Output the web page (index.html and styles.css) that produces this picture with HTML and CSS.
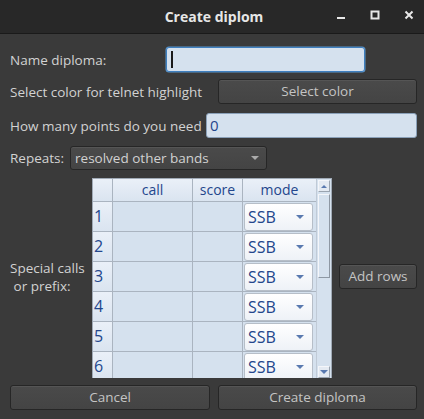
FILE: index.html
```html
<!DOCTYPE html>
<html>
<head>
<meta charset="utf-8">
<link rel="stylesheet" href="styles.css">
</head>
<body>
<div class="window">
  <div class="titlebar">
    <div class="title">Create diplom</div>
    <div class="wbtns">
      <svg class="wb" width="10" height="10" viewBox="0 0 10 10"><rect x="1" y="7" width="8" height="2" fill="#e8e8e8"/></svg>
      <svg class="wb" width="10" height="10" viewBox="0 0 10 10"><rect x="1.5" y="1.5" width="7" height="7" fill="none" stroke="#e8e8e8" stroke-width="2"/></svg>
      <svg class="wb" width="10" height="10" viewBox="0 0 10 10"><path d="M1.5 1.5 L8.5 8.5 M8.5 1.5 L1.5 8.5" stroke="#e8e8e8" stroke-width="2"/></svg>
    </div>
  </div>
  <div class="content">
    <div class="row r1">
      <span class="label l1">Name diploma:</span>
      <div class="input focus name"><span class="caret"></span></div>
    </div>
    <div class="row r2">
      <span class="label">Select color for telnet highlight</span>
      <div class="button selcol">Select color</div>
    </div>
    <div class="row r3">
      <span class="label">How many points do you need</span>
      <div class="input points">0</div>
    </div>
    <div class="row r4">
      <span class="label">Repeats:</span>
      <div class="combo">resolved other bands<span class="tri"></span></div>
    </div>
    <div class="row r5">
      <span class="label special">Special calls<br>&nbsp;or prefix:</span>
      <div class="table">
        <div class="tmain">
          <div class="trow head">
            <div class="c num"></div>
            <div class="c call">call</div>
            <div class="c score">score</div>
            <div class="c mode">mode</div>
          </div>
          <div class="trow"><div class="c num">1</div><div class="c call"></div><div class="c score"></div><div class="c mode"><div class="ssb">SSB<span class="btri"></span></div></div></div>
          <div class="trow"><div class="c num">2</div><div class="c call"></div><div class="c score"></div><div class="c mode"><div class="ssb">SSB<span class="btri"></span></div></div></div>
          <div class="trow"><div class="c num">3</div><div class="c call"></div><div class="c score"></div><div class="c mode"><div class="ssb">SSB<span class="btri"></span></div></div></div>
          <div class="trow"><div class="c num">4</div><div class="c call"></div><div class="c score"></div><div class="c mode"><div class="ssb">SSB<span class="btri"></span></div></div></div>
          <div class="trow"><div class="c num">5</div><div class="c call"></div><div class="c score"></div><div class="c mode"><div class="ssb">SSB<span class="btri"></span></div></div></div>
          <div class="trow"><div class="c num">6</div><div class="c call"></div><div class="c score"></div><div class="c mode"><div class="ssb">SSB<span class="btri"></span></div></div></div>
        </div>
        <div class="sbar">
          <div class="sbtn"><span class="utri"></span></div>
          <div class="slider"></div>
          <div class="strack"></div>
          <div class="sbtn"><span class="btri"></span></div>
        </div>
      </div>
      <div class="button addrows">Add rows</div>
    </div>
    <div class="row r6">
      <div class="button cancel">Cancel</div>
      <div class="button create">Create diploma</div>
    </div>
  </div>
</div>
</body>
</html>
```
FILE: styles.css
```css
html, body {
  margin: 0;
  padding: 0;
  background: #3a3a3a;
}
.window {
  width: 424px;
  height: 419px;
  background: #3a3a3a;
  font-family: "Open Sans", "Noto Sans", sans-serif;
  font-size: 13.5px;
  color: #d2d2d2;
  overflow: hidden;
}
.titlebar {
  height: 33px;
  background: #282828;
  border-bottom: 1px solid #1a1a1a;
  display: flex;
  align-items: center;
  position: relative;
}
.title {
  flex: 1;
  text-align: center;
  padding-left: 4px;
  margin-top: -1px;
  font-weight: bold;
  font-size: 14px;
  color: #e6e6e6;
}
.wbtns {
  position: absolute;
  right: 10px;
  top: 10px;
  display: flex;
  gap: 24px;
}
.wb { display: block; }
.content {
  padding: 0 7px 0 10px;
  display: flex;
  flex-direction: column;
}
.row {
  display: flex;
  align-items: center;
}
.label {
  white-space: nowrap;
  line-height: 18px;
}
.l1 { width: 156px; }
.input {
  height: 23px;
  background: #d5e1ee;
  border: 1px solid #8aa0b8;
  border-radius: 3px;
  box-sizing: content-box;
  color: #23468c;
  font-size: 15px;
  line-height: 23px;
  padding-left: 3px;
}
.input.focus {
  border: 1px solid #3e7fbf;
  box-shadow: 0 0 0 0.5px #5a95cc;
}
.caret {
  display: inline-block;
  width: 2px;
  height: 17px;
  background: #1a1a1a;
  vertical-align: middle;
  margin-left: 1px;
  margin-top: -3px;
}
.r1 { margin-top: 13px; height: 25px; }
.name { width: 194px; }
.button {
  height: 23px;
  border: 1px solid #262626;
  border-radius: 3px;
  background: linear-gradient(#4a4a4a, #444444);
  color: #c4c4c4;
  text-align: center;
  line-height: 23px;
  box-shadow: inset 0 1px 0 #555;
}
.r2 { margin-top: 7px; height: 25px; }
.selcol { margin-left: auto; width: 197px; }
.r3 { margin-top: 9px; height: 25px; }
.points { margin-left: auto; width: 206px; }
.r4 { margin-top: 8px; height: 24px; }
.combo {
  margin-left: 6px;
  width: 186px;
  height: 22px;
  border: 1px solid #262626;
  border-radius: 3px;
  background: linear-gradient(#4a4a4a, #444444);
  color: #d2d2d2;
  line-height: 22px;
  padding-left: 4px;
  padding-right: 5px;
  display: flex;
  align-items: center;
  justify-content: space-between;
  box-shadow: inset 0 1px 0 #555;
}
.tri {
  width: 0; height: 0;
  border-left: 4px solid transparent;
  border-right: 4px solid transparent;
  border-top: 4px solid #aaa;
  margin-right: 2px;
}
.r5 { margin-top: 8px; height: 200px; align-items: center; }
.special { width: 82px; margin-top: -2px; }
.table {
  width: 238px;
  height: 199px;
  border: 1px solid #a0aab6;
  border-bottom: none;
  background: #d5e1ee;
  display: flex;
  overflow: hidden;
}
.tmain {
  width: 223px;
  display: flex;
  flex-direction: column;
}
.trow {
  display: flex;
  height: 30px;
  flex-shrink: 0;
}
.trow.head { height: 23px; }
.c {
  box-sizing: border-box;
  border-right: 1px solid #aab4c0;
  border-bottom: 1px solid #aab4c0;
  color: #23468c;
}
.head .c {
  background: linear-gradient(#eaf0f8, #dae4f0);
  text-align: center;
  line-height: 22px;
  font-size: 14px;
}
.c.num {
  width: 20px;
  background: linear-gradient(#eaf0f8, #dae4f0);
  font-size: 16px;
  line-height: 29px;
  padding-left: 1px;
}
.c.call { width: 80px; }
.c.score { width: 50px; }
.c.mode { width: 73px; border-right: none; padding: 1px 2px 0 1px; }
.head .c.mode { padding: 0; }
.ssb {
  box-sizing: border-box;
  height: 28px;
  width: 69px;
  border: 1px solid #b6bec8;
  border-radius: 3px;
  background: linear-gradient(#ffffff, #eef2f7);
  color: #23468c;
  font-size: 16px;
  line-height: 26px;
  padding-left: 3px;
  display: flex;
  align-items: center;
  justify-content: space-between;
  padding-right: 8px;
}
.btri {
  width: 0; height: 0;
  border-left: 4px solid transparent;
  border-right: 4px solid transparent;
  border-top: 4px solid #5a7ab0;
}
.utri {
  width: 0; height: 0;
  border-left: 3px solid transparent;
  border-right: 3px solid transparent;
  border-bottom: 3px solid #5a7ab0;
}
.sbar {
  width: 15px;
  display: flex;
  flex-direction: column;
  align-items: center;
  padding-top: 1px;
  border-left: 1px solid #c0cad6;
  box-sizing: border-box;
}
.sbtn {
  width: 12px;
  height: 12px;
  box-sizing: border-box;
  border: 1px solid #9aa4b0;
  border-top-color: #f4f6fa;
  border-left-color: #f4f6fa;
  background: #e4eaf2;
  display: flex;
  align-items: center;
  justify-content: center;
  flex-shrink: 0;
}
.slider {
  margin-top: 2px;
  width: 12px;
  height: 84px;
  box-sizing: border-box;
  border: 1px solid #8e98a4;
  border-top-color: #f4f6fa;
  border-left-color: #f4f6fa;
  background: #d5e1ee;
  flex-shrink: 0;
}
.strack { flex: 1; }
.addrows { margin-left: auto; width: 76px; margin-top: -4px; }
.r6 { margin-top: 7px; height: 25px; gap: 8px; }
.cancel { width: 198px; }
.create { width: 197px; }
```
